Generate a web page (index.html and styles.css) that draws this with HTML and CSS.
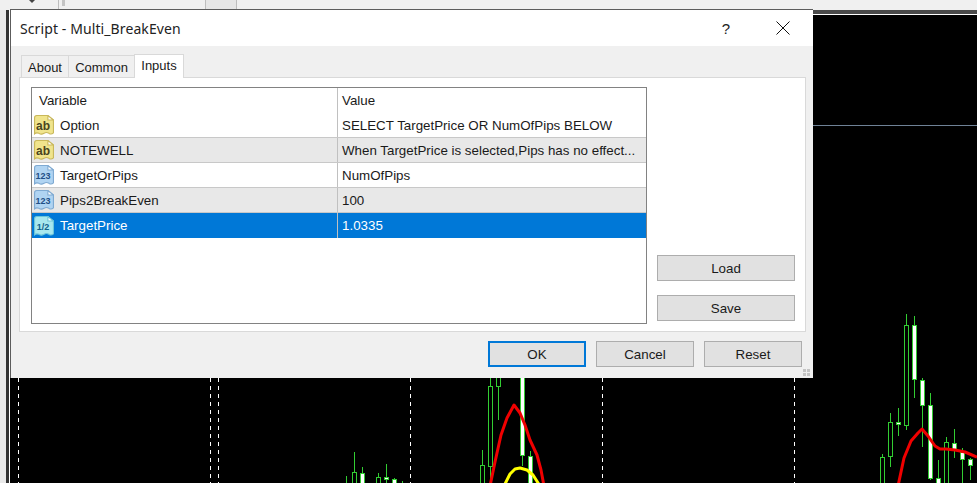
FILE: index.html
```html
<!DOCTYPE html>
<html>
  <head>
    <title>Script - Multi_BreakEven</title>

    <link rel="stylesheet" href="styles.css">
  </head>

  <body>
    <svg class="iconDefs" width="0" height="0">
      <symbol id="sheet" viewBox="1 1 18 18">
        <path d="M1.5 3.5 Q1.5 1.5 3.5 1.5 H13.5 L18.5 5.5 V17 Q16.5 19 14.5 17.5 Q12 16 10 17.5 Q7.5 19 5.5 17.5 Q3 16.5 1.5 18 Z" fill="currentColor" stroke-width="1"/>
        <path d="M13.5 1.5 V5.5 H18.5 Z" fill="#fff" stroke-width="1"/>
      </symbol>
    </svg>

    <div class="toolbar">
      <span class="toolArrow"></span>
      <span class="toolSep sepOne"></span>
      <span class="toolGrip"></span>
      <span class="toolSep sepTwo"></span>
      <span class="toolHatch"></span>
      <span class="toolSep"></span>
    </div>

    <div class="workspace">
      <div class="gutter"></div>
      <svg class="chart" width="967" height="469" viewBox="10 14 967 469">
        <line class="topLine" x1="10" y1="14.5" x2="977" y2="14.5"/>
        <line class="priceLine" x1="10" y1="125.5" x2="977" y2="125.5"/>

        <line class="period" x1="18.5" y1="378" x2="18.5" y2="483"/>
        <line class="period" x1="210.5" y1="378" x2="210.5" y2="483"/>
        <line class="period" x1="218.5" y1="378" x2="218.5" y2="483"/>
        <line class="period" x1="410.5" y1="378" x2="410.5" y2="483"/>
        <line class="period" x1="602.5" y1="378" x2="602.5" y2="483"/>
        <line class="period" x1="794.5" y1="378" x2="794.5" y2="483"/>

        <!-- wicks -->
        <path class="wick" d="M346.5 476V483M354.5 452V483M362.5 467V483M378.5 473V483M386.5 464V483M394.5 478V483M402.5 481V483M482.5 450V483M490.5 378V483M498.5 378V420M522.5 378V466M530.5 451V483M882.5 454V483M890.5 413V467M898.5 408V436M906.5 314V430M914.5 316V398M922.5 378V447M930.5 393V480M938.5 460V483M946.5 437V483M954.5 429V458M962.5 448V483M970.5 458V480"/>

        <!-- hollow candles -->
        <rect class="hollow" x="352.5" y="472.5" width="4" height="14"/>
        <rect class="hollow" x="376.5" y="477.5" width="4" height="9"/>
        <rect class="hollow" x="480.5" y="465.5" width="4" height="21"/>
        <rect class="hollow" x="488.5" y="386.5" width="4" height="80"/>
        <rect class="hollow" x="496.5" y="374.5" width="4" height="12"/>
        <rect class="hollow" x="880.5" y="457.5" width="4" height="30"/>
        <rect class="hollow" x="888.5" y="422.5" width="4" height="34"/>
        <rect class="hollow" x="904.5" y="325.5" width="4" height="100"/>
        <rect class="hollow" x="944.5" y="442.5" width="4" height="44"/>

        <!-- filled candles -->
        <rect class="filled" x="360.5" y="473.5" width="4" height="13"/>
        <rect class="filled" x="384.5" y="477.5" width="4" height="2"/>
        <rect class="filled" x="392.5" y="479.5" width="4" height="7"/>
        <rect class="filled" x="520.5" y="374.5" width="4" height="81"/>
        <rect class="filled" x="528.5" y="456.5" width="4" height="30"/>
        <rect class="filled" x="896.5" y="422.5" width="4" height="2"/>
        <rect class="filled" x="912.5" y="325.5" width="4" height="54"/>
        <rect class="filled" x="920.5" y="380.5" width="4" height="25"/>
        <rect class="filled" x="928.5" y="405.5" width="4" height="73"/>
        <rect class="filled" x="936.5" y="478.5" width="4" height="8"/>
        <rect class="filled" x="952.5" y="443.5" width="4" height="7"/>
        <rect class="filled" x="960.5" y="452.5" width="4" height="7"/>
        <rect class="filled" x="968.5" y="459.5" width="4" height="6"/>

        <!-- moving averages -->
        <path class="avgRed" d="M490 486 L495 462 L501 435 L507 418 L514 405 L520 413 L525 425 L530 440 L537 455 L541 470 L544 486"/>
        <path class="avgRed" d="M898 486 L904 458 L911 441 L918 433 L922 429 L928 436 L935 446 L940 449 L946 449 L955 450 L965 452 L977 457"/>
        <path class="avgYellow" d="M504 486 L510 474 L515 469 L520 468 L527 470 L533 475 L540 486"/>
      </svg>
    </div>

    <div class="dialog">
      <div class="titleBar">
        <span class="titleText">Script - Multi_BreakEven</span>
        <span class="helpBtn">?</span>
        <svg class="closeBtn" width="14" height="14" viewBox="0 0 14 14">
          <path d="M0.5 0.5 L13.5 13.5 M13.5 0.5 L0.5 13.5"/>
        </svg>
      </div>

      <div class="tabs">
        <div class="tab tabAbout">About</div>
        <div class="tab tabCommon">Common</div>
        <div class="tab tabActive">Inputs</div>
      </div>

      <div class="panel">
        <div class="grid">
          <div class="row rowHead">
            <div class="cell cellName">Variable</div>
            <div class="cell">Value</div>
          </div>
          <div class="row">
            <div class="cell cellName">
              <span class="icon iconText"><svg width="20" height="20"><use href="#sheet"/></svg><b>ab</b></span>
              Option
            </div>
            <div class="cell">SELECT TargetPrice OR NumOfPips BELOW</div>
          </div>
          <div class="row rowAlt">
            <div class="cell cellName">
              <span class="icon iconText"><svg width="20" height="20"><use href="#sheet"/></svg><b>ab</b></span>
              NOTEWELL
            </div>
            <div class="cell">When TargetPrice is selected,Pips has no effect...</div>
          </div>
          <div class="row">
            <div class="cell cellName">
              <span class="icon iconNum"><svg width="20" height="20"><use href="#sheet"/></svg><b>123</b></span>
              TargetOrPips
            </div>
            <div class="cell">NumOfPips</div>
          </div>
          <div class="row rowAlt">
            <div class="cell cellName">
              <span class="icon iconNum"><svg width="20" height="20"><use href="#sheet"/></svg><b>123</b></span>
              Pips2BreakEven
            </div>
            <div class="cell">100</div>
          </div>
          <div class="row rowSelected">
            <div class="cell cellName">
              <span class="icon iconFrac"><svg width="20" height="20"><use href="#sheet"/></svg><b>1/2</b></span>
              TargetPrice
            </div>
            <div class="cell">1.0335</div>
          </div>
        </div>

        <div class="sideButtons">
          <button class="btn">Load</button>
          <button class="btn">Save</button>
        </div>
      </div>

      <div class="footer">
        <button class="btn btnDefault">OK</button>
        <button class="btn">Cancel</button>
        <button class="btn">Reset</button>
      </div>

      <svg class="sizeGrip" width="8" height="8" viewBox="0 0 8 8">
        <path d="M0 0h3v3H0zM4 0h3v3H4zM0 4h3v3H0zM4 4h3v3H4z"/>
      </svg>
    </div>
  </body>
</html>
```

FILE: styles.css
```css
body {
  margin: 0px;
  padding: 0px;
  width: 977px;
  height: 483px;
  overflow: hidden;
  background-color: #f0f0f0;
  font-family: "Liberation Sans", sans-serif;
  font-size: 13px;
  color: #1a1a1a;
}

.iconDefs {
  display: block;
  height: 0;
}

/* platform behind the dialog */

.toolbar {
  height: 10px;
  display: flex;
  align-items: stretch;
  background-color: #f0f0f0;
}

.toolArrow {
  width: 0;
  height: 0;
  margin: 0 0 0 29px;
  border-left: 3px solid transparent;
  border-right: 3px solid transparent;
  border-top: 3px solid #444;
}

.toolSep {
  width: 1px;
  background-color: #bdbdbd;
}

.sepOne {
  margin-left: 23px;
}

.toolGrip {
  width: 3px;
  height: 6px;
  margin-left: 3px;
  margin-right: 140px;
  background-color: #c4c4c4;
}

.toolHatch {
  width: 30px;
  background-color: #e6e6e6;
}

.workspace {
  height: 473px;
  display: flex;
}

.gutter {
  width: 10px;
  box-sizing: border-box;
  border-left: 6px solid #e9e9e9;
  border-right: 1px solid #fff;
  background-color: #333;
}

.chart {
  display: block;
  flex: none;
  background-color: #000;
  border-top: 4px solid #4a4a4a;
  height: 469px;
}

.topLine {
  stroke: #fff;
  stroke-width: 1;
}

.priceLine {
  stroke: #6f8296;
  stroke-width: 1;
}

.period {
  stroke: #fff;
  stroke-width: 1;
  stroke-dasharray: 4 4;
}

.wick {
  stroke: #32cd32;
  stroke-width: 1;
  fill: none;
}

.hollow {
  fill: #000;
  stroke: #32cd32;
  stroke-width: 1;
}

.filled {
  fill: #fff;
  stroke: #32cd32;
  stroke-width: 1;
}

.avgRed {
  fill: none;
  stroke: #f00000;
  stroke-width: 3;
  stroke-linejoin: round;
}

.avgYellow {
  fill: none;
  stroke: #ffff00;
  stroke-width: 3;
  stroke-linejoin: round;
}

/* dialog window */

.dialog {
  position: absolute;
  left: 10px;
  top: 9px;
  width: 802px;
  height: 368px;
  background-color: #f0f0f0;
  border-top: 1px solid #5c5c5c;
  border-left: 1px solid #5c5c5c;
  display: flex;
  flex-direction: column;
}

.titleBar {
  height: 36px;
  flex: none;
  display: flex;
  align-items: center;
  background-color: #fff;
  padding-left: 9px;
  padding-right: 23px;
}

.titleText {
  flex: 1;
  font-family: "Noto Sans", sans-serif;
  font-size: 14px;
  letter-spacing: 0.1px;
  color: #222;
}

.helpBtn {
  font-size: 15px;
  margin-right: 46px;
  color: #222;
}

.closeBtn path {
  stroke: #111;
  stroke-width: 1;
  fill: none;
}

.tabs {
  height: 31px;
  flex: none;
  display: flex;
  align-items: flex-end;
  padding-left: 10px;
}

.tab {
  box-sizing: border-box;
  height: 22px;
  line-height: 23px;
  text-align: center;
  background-color: #f0f0f0;
  border: 1px solid #d9d9d9;
  border-bottom: none;
  margin-right: -1px;
}

.tabAbout {
  width: 48px;
}

.tabCommon {
  width: 67px;
}

.tabActive {
  width: 50px;
  height: 24px;
  line-height: 22px;
  margin-bottom: -1px;
  background-color: #fff;
  position: relative;
}

.panel {
  height: 255px;
  flex: none;
  box-sizing: border-box;
  margin-left: 8px;
  margin-right: 7px;
  padding: 9px 10px 7px 11px;
  background-color: #fff;
  border: 1px solid #d9d9d9;
  display: flex;
  gap: 10px;
}

.grid {
  width: 616px;
  height: 237px;
  flex: none;
  box-sizing: border-box;
  border: 1px solid #828282;
  background-color: #fff;
}

.row {
  height: 25px;
  box-sizing: border-box;
  display: flex;
  border-bottom: 1px solid #c8c8c8;
}

.rowHead {
  border-bottom: none;
}

.rowAlt {
  background-color: #e8e8e8;
}

.rowSelected {
  background-color: #0078d7;
  color: #fff;
  border-bottom: none;
}

.cell {
  flex: 1;
  min-width: 0;
  display: flex;
  align-items: center;
  padding-left: 4px;
  white-space: nowrap;
  font-size: 13.35px;
}

.cellName {
  flex: none;
  width: 306px;
  box-sizing: border-box;
  border-right: 1px solid #c0c0c0;
  padding-left: 7px;
}

.row .cellName:has(.icon) {
  padding-left: 2px;
}

.icon {
  position: relative;
  width: 20px;
  height: 20px;
  margin-right: 6px;
  flex: none;
}

.icon svg {
  display: block;
}

.icon b {
  position: absolute;
  left: 0;
  right: 2px;
  top: 5px;
  text-align: center;
  line-height: 12px;
}

.iconText {
  color: #f0e48c;
}

.iconText svg {
  stroke: #c9b85a;
}

.iconText b {
  color: #4a4420;
  font-size: 12px;
}

.iconNum {
  color: #b0d4f2;
}

.iconNum svg {
  stroke: #7faad2;
}

.iconNum b {
  color: #1f4f86;
  font-size: 9px;
}

.iconFrac {
  color: #a8e8ee;
}

.iconFrac svg {
  stroke: #6cc6d8;
}

.iconFrac b {
  color: #10608a;
  font-size: 9px;
}

.sideButtons {
  flex: 1;
  display: flex;
  flex-direction: column;
  justify-content: flex-end;
  gap: 14px;
  padding-bottom: 3px;
}

.btn {
  box-sizing: border-box;
  height: 26px;
  padding: 0;
  font-family: inherit;
  font-size: 13.35px;
  color: #1a1a1a;
  background-color: #e1e1e1;
  border: 1px solid #adadad;
}

.footer {
  display: flex;
  justify-content: flex-end;
  gap: 10px;
  padding-top: 9px;
  padding-right: 11px;
}

.footer .btn {
  width: 98px;
}

.btnDefault {
  border: 2px solid #0078d7;
}

.sizeGrip {
  position: absolute;
  right: 2px;
  bottom: 1px;
}

.sizeGrip path {
  fill: #c4c4c4;
}
```
